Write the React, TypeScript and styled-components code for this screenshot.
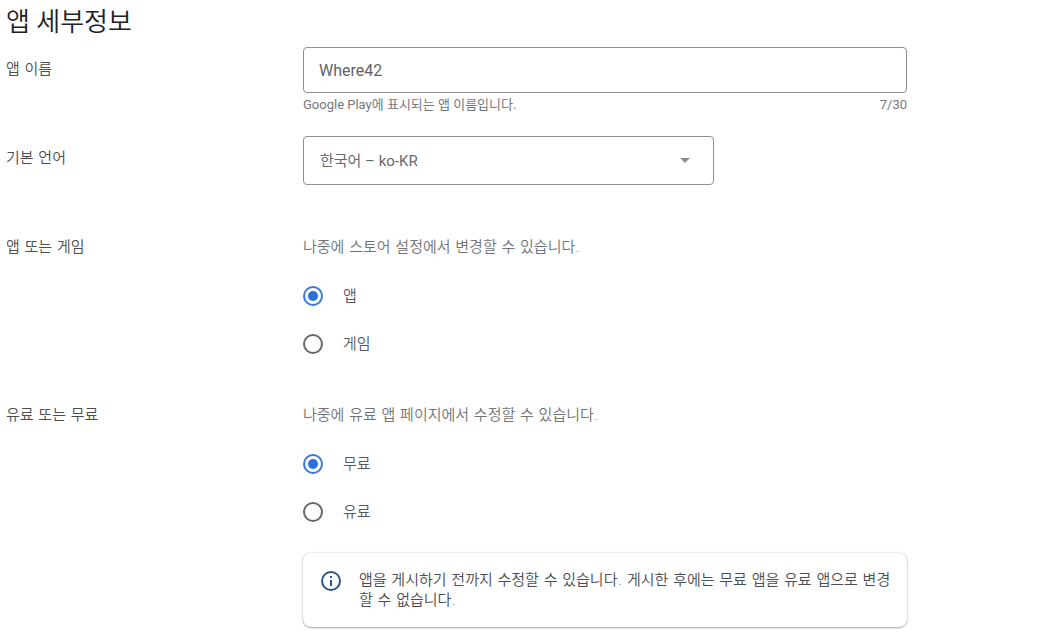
import React, { useState } from "react";
import styled, { createGlobalStyle } from "styled-components";

const GlobalStyle = createGlobalStyle`
  *, *::before, *::after { box-sizing: border-box; }
  body {
    margin: 0;
    background: #fff;
    color: #55585d;
    font-family: "DejaVu Sans", "Noto Sans CJK KR", sans-serif;
    font-size: 15px;
    font-weight: 350;
    line-height: 20px;
  }
`;

const latinFirst = `Roboto, "Noto Sans CJK KR", sans-serif`;

const Page = styled.main`
  padding: 6px 6px 10px;
`;

const Title = styled.h1`
  margin: 0 0 9px;
  color: #202124;
  font-family: ${latinFirst};
  font-size: 26px;
  font-weight: 350;
  line-height: 32px;
`;

const Row = styled.div<{ $space?: number }>`
  display: grid;
  grid-template-columns: 297px minmax(0, 604px);
  margin-bottom: ${(p) => p.$space ?? 0}px;
`;

const FieldLabel = styled.label`
  padding-top: 12px;
  color: #4a4d52;
`;

const GroupLabel = styled.span`
  color: #4a4d52;
`;

const TextInput = styled.input`
  display: block;
  width: 100%;
  height: 46px;
  padding: 0 15px;
  border: 1px solid #8c8e91;
  border-radius: 4px;
  background: #fff;
  color: #5f6166;
  font: inherit;
  font-family: ${latinFirst};
  font-size: 16px;
  font-weight: 400;
`;

const Hint = styled.div`
  display: flex;
  justify-content: space-between;
  margin-top: 2px;
  color: #75787c;
  font-family: ${latinFirst};
  font-size: 13px;
  font-weight: 400;
`;

const SelectBox = styled.div`
  display: grid;
  align-items: center;
  width: 411px;
  max-width: 100%;

  > * {
    grid-area: 1 / 1;
  }
`;

const Select = styled.select`
  width: 100%;
  height: 49px;
  padding: 0 48px 0 16px;
  border: 1px solid #8c8e91;
  border-radius: 4px;
  background: #fff;
  color: #66696d;
  font: inherit;
  font-family: ${latinFirst};
  font-weight: 400;
  appearance: none;
`;

const Arrow = styled.svg`
  justify-self: end;
  margin-right: 24px;
  pointer-events: none;
`;

const Description = styled.p`
  margin: 0 0 15px;
  color: #707377;
`;

const Option = styled.label`
  display: flex;
  align-items: center;
  gap: 20px;
  height: 48px;
`;

const Radio = styled.input`
  display: grid;
  place-items: center;
  width: 20px;
  height: 20px;
  margin: 0;
  border: 2px solid #65686c;
  border-radius: 50%;
  appearance: none;

  &:checked {
    border-color: #3b78d8;
  }
  &:checked::before {
    content: "";
    width: 10px;
    height: 10px;
    border-radius: 50%;
    background: #2a6fdb;
  }
`;

const Notice = styled.aside`
  display: flex;
  align-items: flex-start;
  gap: 17px;
  margin-top: 17px;
  padding: 17px 16px 17px 17px;
  border-radius: 8px;
  box-shadow: 0 1px 2px rgba(60, 64, 67, 0.4), 0 0 2px rgba(60, 64, 67, 0.25);
  color: #4a4d52;
`;

const NoticeIcon = styled.svg`
  flex: none;
`;

const NoticeText = styled.p`
  flex: 1;
  margin: 0;
`;

interface RadioGroupProps {
  name: string;
  label: string;
  options: string[];
}

function RadioGroup({ name, label, options }: RadioGroupProps) {
  const [value, setValue] = useState(options[0]);
  return (
    <div role="radiogroup" aria-labelledby={label}>
      {options.map((option) => (
        <Option key={option}>
          <Radio
            type="radio"
            name={name}
            checked={value === option}
            onChange={() => setValue(option)}
          />
          {option}
        </Option>
      ))}
    </div>
  );
}

export default function App() {
  const [appName, setAppName] = useState("Where42");
  return (
    <>
      <GlobalStyle />
      <Page lang="ko">
        <Title>앱 세부정보</Title>

        <Row $space={21}>
          <FieldLabel htmlFor="app-name">앱 이름</FieldLabel>
          <div>
            <TextInput
              id="app-name"
              type="text"
              maxLength={30}
              value={appName}
              onChange={(e) => setAppName(e.target.value)}
            />
            <Hint>
              <span>Google Play에 표시되는 앱 이름입니다.</span>
              <span>{appName.length}/30</span>
            </Hint>
          </div>
        </Row>

        <Row $space={52}>
          <FieldLabel htmlFor="language">기본 언어</FieldLabel>
          <SelectBox>
            <Select id="language">
              <option>한국어 – ko-KR</option>
            </Select>
            <Arrow width="10" height="5" viewBox="0 0 10 5" aria-hidden="true">
              <path d="M0 0h10L5 5z" fill="#8c8e91" />
            </Arrow>
          </SelectBox>
        </Row>

        <Row $space={37}>
          <GroupLabel id="kind-label">앱 또는 게임</GroupLabel>
          <div>
            <Description>나중에 스토어 설정에서 변경할 수 있습니다.</Description>
            <RadioGroup name="kind" label="kind-label" options={["앱", "게임"]} />
          </div>
        </Row>

        <Row>
          <GroupLabel id="price-label">유료 또는 무료</GroupLabel>
          <div>
            <Description>나중에 유료 앱 페이지에서 수정할 수 있습니다.</Description>
            <RadioGroup name="price" label="price-label" options={["무료", "유료"]} />
            <Notice>
              <NoticeIcon width="22" height="22" viewBox="0 0 22 22" aria-hidden="true">
                <circle cx="11" cy="11" r="9" fill="none" stroke="#2f5583" strokeWidth="2" />
                <path d="M10 6h2v2h-2zM10 10h2v6h-2z" fill="#2f5583" />
              </NoticeIcon>
              <NoticeText>
                앱을 게시하기 전까지 수정할 수 있습니다. 게시한 후에는 무료 앱을 유료 앱으로 변경할 수 없습니다.
              </NoticeText>
            </Notice>
          </div>
        </Row>
      </Page>
    </>
  );
}
